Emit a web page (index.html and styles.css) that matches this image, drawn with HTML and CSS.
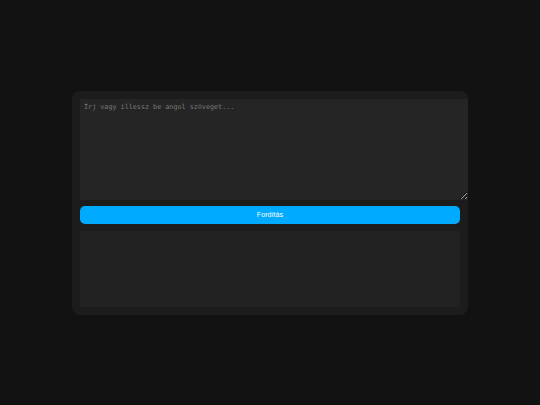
FILE: index.html
```html
<!DOCTYPE html>
<html lang="hu">

<head>
    <meta charset="UTF-8">
    <meta name="viewport" content="width=device-width, initial-scale=1.0">
    <title>Fordító</title>
    <link rel="stylesheet" href="styles.css">
</head>

<body>
    <div class="forditas-container">
        <!-- Bemenet -->
        <textarea class="bemenet" id="bemenet" placeholder="Írj vagy illessz be angol szöveget..."></textarea>

        <button class="button" id="forditas-btn">Fordítás</button>

        <!-- Eredmény -->
        <div class="kimenet" id="kimenet"></div>
    </div>
</body>

</html>
```

FILE: styles.css
```css
body {
    margin: 0;
    background-color: #121212;
    display: flex;
    justify-content: center;
    align-items: center;
    height: 100vh;
    font-family: 'Liberation Sans', Arial, sans-serif;
}

.forditas-container {
    width: 380px;
    padding: 8px;
    background-color: #1c1c1c;
    border-radius: 8px;
    display: flex;
    flex-direction: column;
}

.bemenet {
    display: block;
    width: 100%;
    height: 93px;
    padding: 4px;
    margin: 0;
    border: none;
    outline: none;
    background-color: #252525;
    color: #cccccc;
    font-family: 'DejaVu Sans Mono', 'Liberation Mono', monospace;
    font-size: 6.75px;
}

.bemenet::placeholder {
    color: #7a7a7a;
}

.button {
    margin-top: 6px;
    height: 18px;
    padding: 0;
    border: none;
    border-radius: 5px;
    background-color: #00aaff;
    color: white;
    font-family: 'Liberation Sans', Arial, sans-serif;
    font-size: 7.2px;
    cursor: pointer;
}

.kimenet {
    margin-top: 7px;
    height: 76px;
    background-color: #222222;
}
```
